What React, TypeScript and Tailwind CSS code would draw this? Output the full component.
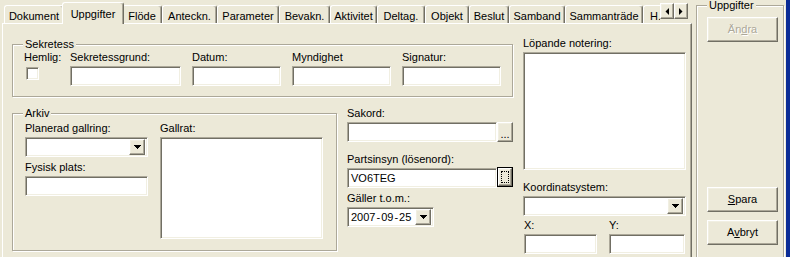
import type { ReactNode } from 'react';

const sunken =
  'border border-t-[#ACA899] border-l-[#ACA899] border-r-white border-b-white shadow-[inset_1px_1px_0_#716F64,inset_-1px_-1px_0_#F1EFE2] bg-white';
const raised =
  'border border-t-white border-l-white border-r-[#716F64] border-b-[#716F64] shadow-[inset_-1px_-1px_0_#ACA899,inset_1px_1px_0_#F1EFE2] bg-[#ECE9D8]';

const tabs = [
  { label: 'Dokument', w: 'w-[60px]' },
  { label: 'Uppgifter', w: 'w-[62px]', active: true },
  { label: 'Flöde', w: 'w-[40px]' },
  { label: 'Anteckn.', w: 'w-[55px]' },
  { label: 'Parameter', w: 'w-[62px]' },
  { label: 'Bevakn.', w: 'w-[51px]' },
  { label: 'Aktivitet', w: 'w-[47px]' },
  { label: 'Deltag.', w: 'w-[48px]' },
  { label: 'Objekt', w: 'w-[44px]' },
  { label: 'Beslut', w: 'w-[40px]' },
  { label: 'Samband', w: 'w-[56px]' },
  { label: 'Sammanträde', w: 'w-[78px]' },
  { label: 'H.', w: 'w-[60px]', left: true },
];

function DownArrow() {
  return (
    <svg width="7" height="4" viewBox="0 0 7 4" className="block">
      <rect x="0" y="0" width="7" height="1" fill="#000" />
      <rect x="1" y="1" width="5" height="1" fill="#000" />
      <rect x="2" y="2" width="3" height="1" fill="#000" />
      <rect x="3" y="3" width="1" height="1" fill="#000" />
    </svg>
  );
}

function SideArrow({ dir }: { dir: 'left' | 'right' }) {
  const pts = dir === 'left' ? '4,0 4,7 0.5,3.5' : '0,0 0,7 3.5,3.5';
  return (
    <svg width="4" height="7" viewBox="0 0 4 7" className="block">
      <polygon points={pts} fill="#000" />
    </svg>
  );
}

function Label({ children, className = '' }: { children: ReactNode; className?: string }) {
  return <div className={`h-[13px] leading-[13px] whitespace-nowrap ${className}`}>{children}</div>;
}

function Field({ w, h = 'h-[20px]', children }: { w: string; h?: string; children?: ReactNode }) {
  return <div className={`${sunken} ${w} ${h} mt-[2px] pl-[3px] flex items-center`}>{children}</div>;
}

function Combo({ w, children }: { w: string; children?: ReactNode }) {
  return (
    <div className={`${sunken} ${w} h-[20px] mt-[2px] flex items-center p-[2px]`}>
      <div className="flex-1 pl-[1px] flex items-center whitespace-nowrap">{children}</div>
      <div className={`${raised} w-[16px] h-[16px] flex items-center justify-center`}>
        <DownArrow />
      </div>
    </div>
  );
}

function Group({ title, className, titleLeft = 'left-[10px]', children }: { title: string; className: string; titleLeft?: string; children: ReactNode }) {
  return (
    <div className={`relative border border-[#ACA899] shadow-[1px_1px_0_#fff,inset_1px_1px_0_#fff] ${className}`}>
      <span className={`absolute -top-[7px] ${titleLeft} px-[2px] bg-[#ECE9D8] leading-[13px]`}>{title}</span>
      {children}
    </div>
  );
}

function Button({ children, className = '', disabled }: { children: ReactNode; className?: string; disabled?: boolean }) {
  return (
    <div
      className={`${raised} w-[71px] h-[25px] flex items-center justify-center ${
        disabled ? 'text-[#ACA899] [text-shadow:1px_1px_0_#fff]' : ''
      } ${className}`}
    >
      {children}
    </div>
  );
}

export default function App() {
  return (
    <div className="w-[790px] h-[257px] overflow-hidden flex bg-[#ECE9D8] text-black text-[11px] leading-[13px] font-['Liberation_Sans',Arial,sans-serif]">
      {/* tab control */}
      <div className="w-[692px] h-[275px] flex flex-col shrink-0">
        <div className="relative z-10 h-[24px] -mb-[1px] flex">
          <div className="w-[660px] h-full overflow-hidden flex items-end pl-[4px]">
            {tabs.map((t) =>
              t.active ? (
                <div
                  key={t.label}
                  className={`${t.w} shrink-0 h-[22px] -mx-[2px] relative z-10 bg-[#ECE9D8] border-l border-t border-r border-l-white border-t-white border-r-[#716F64] shadow-[inset_-1px_0_0_#ACA899] rounded-t-[3px] pt-[5px] text-center`}
                >
                  {t.label}
                </div>
              ) : (
                <div
                  key={t.label}
                  className={`${t.w} shrink-0 h-[18px] mb-[1px] border-l border-t border-r border-l-white border-t-white border-r-[#716F64] shadow-[inset_-1px_0_0_#ACA899] rounded-t-[3px] pt-[4px] ${
                    t.left ? 'pl-[6px] text-left' : 'text-center'
                  }`}
                >
                  {t.label}
                </div>
              )
            )}
          </div>
          <div className="flex pt-[3px]">
            <div className={`${raised} w-[14px] h-[16px] flex items-center justify-center`}>
              <SideArrow dir="left" />
            </div>
            <div className={`${raised} w-[14px] h-[16px] flex items-center justify-center`}>
              <SideArrow dir="right" />
            </div>
          </div>
        </div>

        <div className="ml-[2px] w-[690px] flex-1 border-l border-t border-r border-l-white border-t-white border-r-[#716F64] shadow-[inset_-1px_0_0_#ACA899] flex pl-[9px]">
          {/* left side */}
          <div className="w-[501px] shrink-0 flex flex-col">
            <Group title="Sekretess" className="mt-[20px] w-[501px] h-[53px] flex items-start pt-[6px] pl-[11px]">
              <div className="w-[46px]">
                <Label>Hemlig:</Label>
                <div className={`${sunken} w-[13px] h-[13px] mt-[3px] ml-[2px]`} />
              </div>
              <div className="w-[111px]">
                <Label>Sekretessgrund:</Label>
                <Field w="w-[111px]" />
              </div>
              <div className="w-[89px] ml-[11px]">
                <Label>Datum:</Label>
                <Field w="w-[89px]" />
              </div>
              <div className="w-[99px] ml-[11px]">
                <Label>Myndighet</Label>
                <Field w="w-[99px]" />
              </div>
              <div className="w-[99px] ml-[11px]">
                <Label>Signatur:</Label>
                <Field w="w-[99px]" />
              </div>
            </Group>

            <div className="mt-[10px] flex items-start">
              <Group title="Arkiv" className="mt-[6px] w-[325px] h-[138px] flex items-start pt-[8px] pl-[12px]">
                <div className="w-[123px]">
                  <Label>Planerad gallring:</Label>
                  <Combo w="w-[123px]" />
                  <Label className="mt-[4px]">Fysisk plats:</Label>
                  <Field w="w-[123px]" />
                </div>
                <div className="w-[163px] ml-[12px]">
                  <Label>Gallrat:</Label>
                  <Field w="w-[163px]" h="h-[102px]" />
                </div>
              </Group>

              <div className="ml-[10px] w-[166px]">
                <Label>Sakord:</Label>
                <div className="mt-[2px] flex">
                  <div className={`${sunken} w-[150px] h-[20px]`} />
                  <div className={`${raised} w-[16px] h-[20px] flex items-end justify-center pb-[2px] leading-[9px]`}>...</div>
                </div>
                <Label className="mt-[11px]">Partsinsyn (lösenord):</Label>
                <div className="mt-[2px] flex">
                  <div className={`${sunken} w-[150px] h-[20px] pl-[3px] flex items-center`}>VO6TEG</div>
                  <div className="w-[16px] h-[20px] border border-black -mt-[1px]">
                    <div className={`${raised} w-full h-full p-[2px]`}>
                      <div className="w-full h-full border border-dotted border-black" />
                    </div>
                  </div>
                </div>
                <Label className="mt-[4px]">Gäller t.o.m.:</Label>
                <Combo w="w-[87px]">
                  <span>2007</span>
                  <span className="mx-[1px]">-</span>
                  <span>09</span>
                  <span className="mx-[1px]">-</span>
                  <span>25</span>
                </Combo>
              </div>
            </div>
          </div>

          {/* right side */}
          <div className="ml-[10px] w-[163px] shrink-0 flex flex-col">
            <Label className="mt-[13px]">Löpande notering:</Label>
            <Field w="w-[163px]" h="h-[118px]" />
            <Label className="mt-[11px]">Koordinatsystem:</Label>
            <Combo w="w-[163px]" />
            <div className="mt-[3px] flex">
              <div className="w-[74px] pl-[1px]">
                <Label>X:</Label>
                <Field w="w-[73px]" />
              </div>
              <div className="w-[76px] ml-[12px]">
                <Label>Y:</Label>
                <Field w="w-[76px]" />
              </div>
            </div>
          </div>
        </div>
      </div>

      {/* action group */}
      <Group title="Uppgifter" className="ml-[4px] mt-[5px] w-[88px] h-[270px] shrink-0 flex flex-col pl-[10px]">
        <Button disabled className="mt-[11px]">
          Än<span className="underline">d</span>ra
        </Button>
        <Button className="mt-[145px]">
          <span className="underline">S</span>para
        </Button>
        <Button className="mt-[8px]">
          A<span className="underline">v</span>bryt
        </Button>
      </Group>

      <div className="ml-[2px] w-[4px] h-full shrink-0 bg-[#0B2C96]" />
    </div>
  );
}
